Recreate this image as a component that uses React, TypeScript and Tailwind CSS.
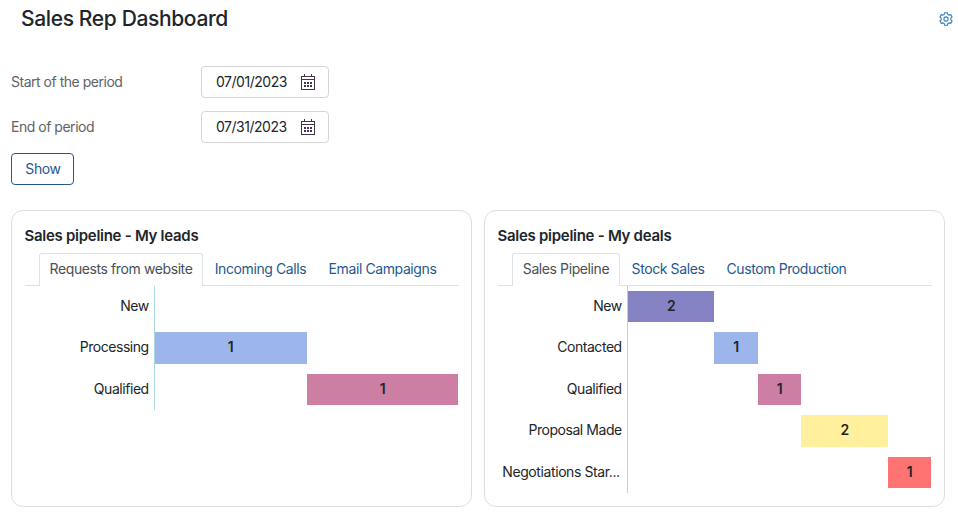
type Stage = { label: string; value?: number; start: number; span: number; color: string };

type Pipeline = {
  title: string;
  tabs: { name: string; width: string }[];
  axis: string;
  total: number;
  stages: Stage[];
};

const leads: Pipeline = {
  title: "Sales pipeline - My leads",
  tabs: [
    { name: "Requests from website", width: "w-[164px]" },
    { name: "Incoming Calls", width: "w-[115px]" },
    { name: "Email Campaigns", width: "w-[129px]" },
  ],
  axis: "bg-[#add8e6]",
  total: 2,
  stages: [
    { label: "New", start: 0, span: 0, color: "" },
    { label: "Processing", value: 1, start: 0, span: 1, color: "bg-[#9cb6ec]" },
    { label: "Qualified", value: 1, start: 1, span: 1, color: "bg-[#cd7fa3]" },
  ],
};

const deals: Pipeline = {
  title: "Sales pipeline - My deals",
  tabs: [
    { name: "Sales Pipeline", width: "w-[108px]" },
    { name: "Stock Sales", width: "w-[96px]" },
    { name: "Custom Production", width: "w-[141px]" },
  ],
  axis: "bg-[#add8e6]",
  total: 7,
  stages: [
    { label: "New", value: 2, start: 0, span: 2, color: "bg-[#8583c4]" },
    { label: "Contacted", value: 1, start: 2, span: 1, color: "bg-[#9cb6ec]" },
    { label: "Qualified", value: 1, start: 3, span: 1, color: "bg-[#cd7fa3]" },
    { label: "Proposal Made", value: 2, start: 4, span: 2, color: "bg-[#fff09d]" },
    { label: "Negotiations Star...", value: 1, start: 6, span: 1, color: "bg-[#ff7373]" },
  ],
};

function CalendarIcon() {
  return (
    <svg width="14" height="16" viewBox="0 0 14 16" fill="none" stroke="#43354f" shapeRendering="crispEdges">
      <rect x="0.5" y="2.5" width="13" height="13" />
      <path d="M3.5 0v3M10.5 0v3M1 5.500h12" />
      <path d="M3 9h2M6 9h2M9 9h2M3 12h2M6 12h2M9 12h2" strokeWidth="2" />
    </svg>
  );
}

function GearIcon() {
  return (
    <svg width="14" height="14" viewBox="0 0 14 14" fill="none" stroke="#3a80b8" strokeWidth="1.1" strokeLinejoin="round">
      <path d="M5.6 .7h2.8l.4 1.7 1.2.7 1.7-.5 1.4 2.4L11.8 6.200v1.6l1.3 1.2-1.4 2.4-1.700-.5-1.200.7-.4 1.700H5.600l-.4-1.700-1.200-.7-1.700.5L.9 9l1.300-1.200V6.200L.9 5l1.400-2.400 1.700.5 1.200-.7z" />
      <circle cx="7" cy="7" r="2.1" />
    </svg>
  );
}

function DateField({ label, value }: { label: string; value: string }) {
  return (
    <div className="flex h-8 items-center">
      <span className="h-[23px] w-[190px] tracking-[-0.48px] text-[#5f6266]">{label}</span>
      <div className="flex h-8 w-32 items-center rounded-[4px] border border-[#d5d5d7] pl-[14px]">
        <span className="h-[23px] w-[85px] tracking-[-0.48px]">{value}</span>
        <CalendarIcon />
      </div>
    </div>
  );
}

function PipelineCard({ data }: { data: Pipeline }) {
  return (
    <section className="h-[297px] w-[461px] rounded-[12px] border border-[#dedee0] px-[13px] pt-[14px]">
      <h2 className="-ml-[0.5px] h-7 text-[15px] leading-[22px] font-semibold tracking-[-0.28px]">{data.title}</h2>
      <div className="flex h-[33px] w-[434px]">
        <div className="w-[14px] border-b border-[#dee2e6]" />
        {data.tabs.map((tab, i) => (
          <div
            key={tab.name}
            className={`${tab.width} ${
              i === 0
                ? "rounded-t-[3px] border border-b-0 border-[#dee2e6] text-[#495057]"
                : "border-b border-[#dee2e6] pt-px text-[#24588f]"
            } text-center leading-[30px] whitespace-nowrap`}
          >
            {tab.name}
          </div>
        ))}
        <div className="flex-1 border-b border-[#dee2e6]" />
      </div>
      <div className="flex">
        <div className="w-[128.72px] shrink-0 pr-[5px]">
          {data.stages.map((s) => (
            <div
              key={s.label}
              className={`h-[41.4px] text-right leading-[39.4px] whitespace-nowrap ${
                s.label.endsWith("...") ? "pr-[2px] tracking-[-0.4px]" : "tracking-[-0.45px]"
              }`}
            >
              {s.label}
            </div>
          ))}
        </div>
        <div className={`w-px shrink-0 ${data.axis}`} />
        <div className="w-[303.6px] shrink-0">
          {data.stages.map((s) => (
            <div key={s.label} className="h-[41.4px] py-[5px]">
              {s.value !== undefined && (
                <div
                  className={`${s.color} h-full text-center leading-[29.4px] font-semibold`}
                  style={{
                    marginLeft: `${(s.start / data.total) * 100}%`,
                    width: `${(s.span / data.total) * 100}%`,
                  }}
                >
                  {s.value}
                </div>
              )}
            </div>
          ))}
        </div>
      </div>
    </section>
  );
}

export default function App() {
  return (
    <main className="h-[512px] w-[958px] overflow-hidden bg-white font-['Inter',sans-serif] text-[14px] tracking-[-0.4px] text-[#212529]">
      <header className="flex h-[66px] items-start justify-between pt-[4px] pr-[5px] pl-[21px]">
        <h1 className="text-[21px] leading-[30px] font-medium tracking-[-0.36px]">Sales Rep Dashboard</h1>
        <div className="pt-2">
          <GearIcon />
        </div>
      </header>
      <div className="flex flex-col gap-[13px] pl-[11px]">
        <DateField label="Start of the period" value="07/01/2023" />
        <DateField label="End of period" value="07/31/2023" />
      </div>
      <div className="pt-[10px] pl-[11px]">
        <button className="block h-8 w-[63px] rounded-[4px] border border-[#24588f] pb-[2px] pl-px text-center text-[#24588f]">Show</button>
      </div>
      <div className="flex gap-3 pt-[25px] pl-[11px]">
        <PipelineCard data={leads} />
        <PipelineCard data={deals} />
      </div>
    </main>
  );
}
